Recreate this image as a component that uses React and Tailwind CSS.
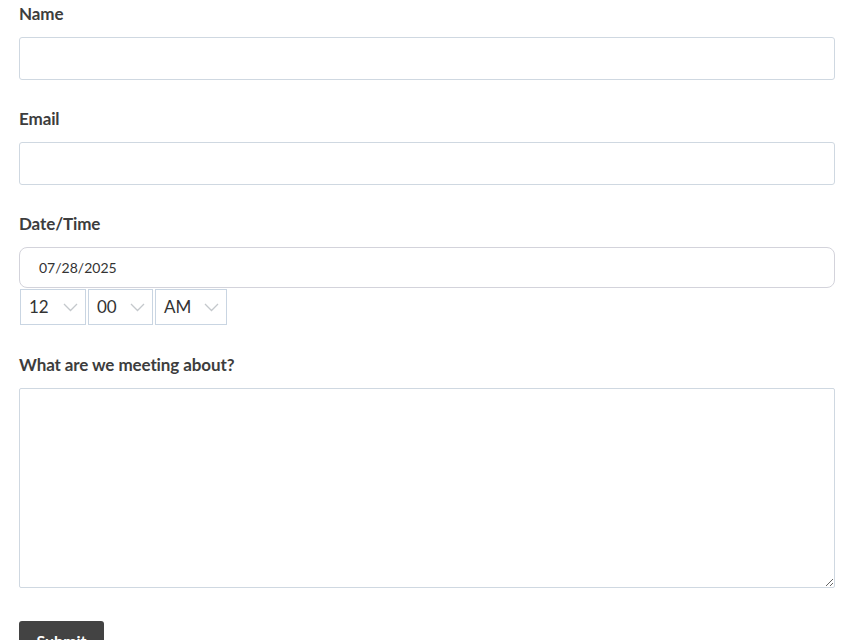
const Chevron = () => (
  <svg width="15" height="9" viewBox="0 0 15 9" fill="none" className="absolute right-[7px] top-[13px]">
    <path d="M1 1l6.5 6.5L14 1" stroke="#c4c8cc" strokeWidth="1.3" />
  </svg>
);

const TimeSelect = ({ value, width }) => (
  <div className={`relative h-[36px] border border-[#c9d5e2] bg-white ${width}`}>
    <span className="absolute left-[8px] top-[6px] text-[17px] leading-[22px] text-[#333]">{value}</span>
    <Chevron />
  </div>
);

const Label = ({ children }) => (
  <label className="block h-[24px] mb-[11px] text-[17px] leading-[24px] font-bold text-[#3d3d3d] tracking-[-0.1px]">
    {children}
  </label>
);

export default function App() {
  return (
    <div className="min-h-screen bg-white pl-[19px] pr-[17px] pt-[2px] font-['Lato',sans-serif]">
      <Label>Name</Label>
      <div className="h-[43px] rounded-[3px] border border-[#cfd8e1]"></div>

      <div className="mt-[27px]">
        <Label>Email</Label>
        <div className="h-[43px] rounded-[3px] border border-[#cfd8e1]"></div>
      </div>

      <div className="mt-[27px]">
        <Label>Date/Time</Label>
        <div className="h-[41px] rounded-[8px] border border-[#d3d3db] flex items-center pl-[19px] text-[14px] text-[#333]">
          07/28/2025
        </div>
        <div className="flex gap-[2px] ml-[1px] mt-[1px]">
          <TimeSelect value="12" width="w-[66px]" />
          <TimeSelect value="00" width="w-[65px]" />
          <TimeSelect value="AM" width="w-[72px]" />
        </div>
      </div>

      <div className="mt-[28px]">
        <Label>What are we meeting about?</Label>
        <textarea className="block w-full h-[200px] rounded-[2px] border border-[#cfd8e1] resize-y"></textarea>
      </div>

      <button className="mt-[33px] h-[40px] w-[85px] rounded-t-[3px] bg-[#434343] text-white text-[16px] font-bold">
        Submit
      </button>
    </div>
  );
}
